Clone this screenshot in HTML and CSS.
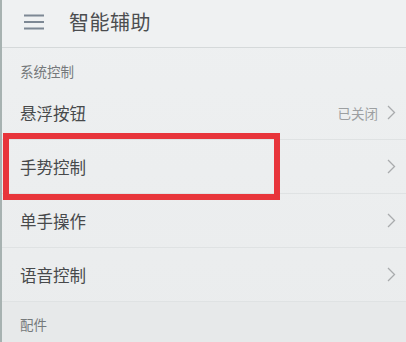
FILE: index.html
```html
<!DOCTYPE html>
<html lang="zh">
<head>
<meta charset="utf-8">
<link rel="stylesheet" href="styles.css">
</head>
<body>
<div class="screen">
  <header class="topbar">
    <svg class="menu" width="22" height="16" viewBox="0 0 22 16"><path d="M1 1.5H21M1 8H21M1 14.5H21" stroke="#7d8894" stroke-width="1.8" fill="none"/></svg>
    <span class="title">智能辅助</span>
  </header>
  <div class="section">系统控制</div>
  <div class="row"><span class="label">悬浮按钮</span><span class="right"><span class="value">已关闭</span><svg class="chev" width="9" height="15" viewBox="0 0 9 15"><path d="M1 1L7.5 7.5L1 14" stroke="#a9abad" stroke-width="1.3" fill="none"/></svg></span></div>
  <div class="row"><span class="label">手势控制</span><span class="right"><svg class="chev" width="9" height="15" viewBox="0 0 9 15"><path d="M1 1L7.5 7.5L1 14" stroke="#a9abad" stroke-width="1.3" fill="none"/></svg></span></div>
  <div class="row"><span class="label">单手操作</span><span class="right"><svg class="chev" width="9" height="15" viewBox="0 0 9 15"><path d="M1 1L7.5 7.5L1 14" stroke="#a9abad" stroke-width="1.3" fill="none"/></svg></span></div>
  <div class="row last"><span class="label">语音控制</span><span class="right"><svg class="chev" width="9" height="15" viewBox="0 0 9 15"><path d="M1 1L7.5 7.5L1 14" stroke="#a9abad" stroke-width="1.3" fill="none"/></svg></span></div>
  <div class="section bottom">配件</div>
  <div class="highlight"></div>
</div>
</body>
</html>
```
FILE: styles.css
```css
html, body {
  margin: 0;
  padding: 0;
}
body {
  width: 406px;
  height: 342px;
  overflow: hidden;
  background: #eceeef;
  font-family: "Noto Sans CJK SC", "Noto Sans", sans-serif;
}
.screen {
  position: relative;
  height: 342px;
  border-left: 2px solid #a7b2b1;
  box-sizing: border-box;
  background: linear-gradient(to bottom, #eef0f1, #eaeced);
}
.topbar {
  height: 47px;
  border-bottom: 1px solid #d5d9da;
  display: flex;
  align-items: center;
  padding-left: 21px;
  background: #eff1f2;
}
.menu {
  margin-top: -4px;
}
.title {
  margin-left: 24px;
  font-size: 20px;
  color: #4b4d4f;
  letter-spacing: 0.5px;
  margin-top: -4px;
}
.section {
  height: 38px;
  display: flex;
  align-items: center;
  padding-left: 18px;
  padding-top: 8px;
  box-sizing: border-box;
  font-size: 13.5px;
  color: #75797b;
}
.section.bottom {
  height: 40px;
  padding-top: 4px;
  background: #e7e9ea;
}
.row {
  height: 54px;
  display: flex;
  align-items: center;
  justify-content: space-between;
  padding-left: 18px;
  padding-right: 10px;
  border-bottom: 1px solid #dfe2e3;
  box-sizing: border-box;
}
.label {
  font-size: 16.5px;
  color: #47494b;
}
.right {
  display: flex;
  align-items: center;
  gap: 9px;
}
.value {
  font-size: 13.5px;
  color: #9c9fa1;
}
.chev {
  display: block;
}
.highlight {
  position: absolute;
  left: 1px;
  top: 133px;
  width: 277px;
  height: 67px;
  border: 6px solid #e8353b;
  box-sizing: border-box;
}
```
